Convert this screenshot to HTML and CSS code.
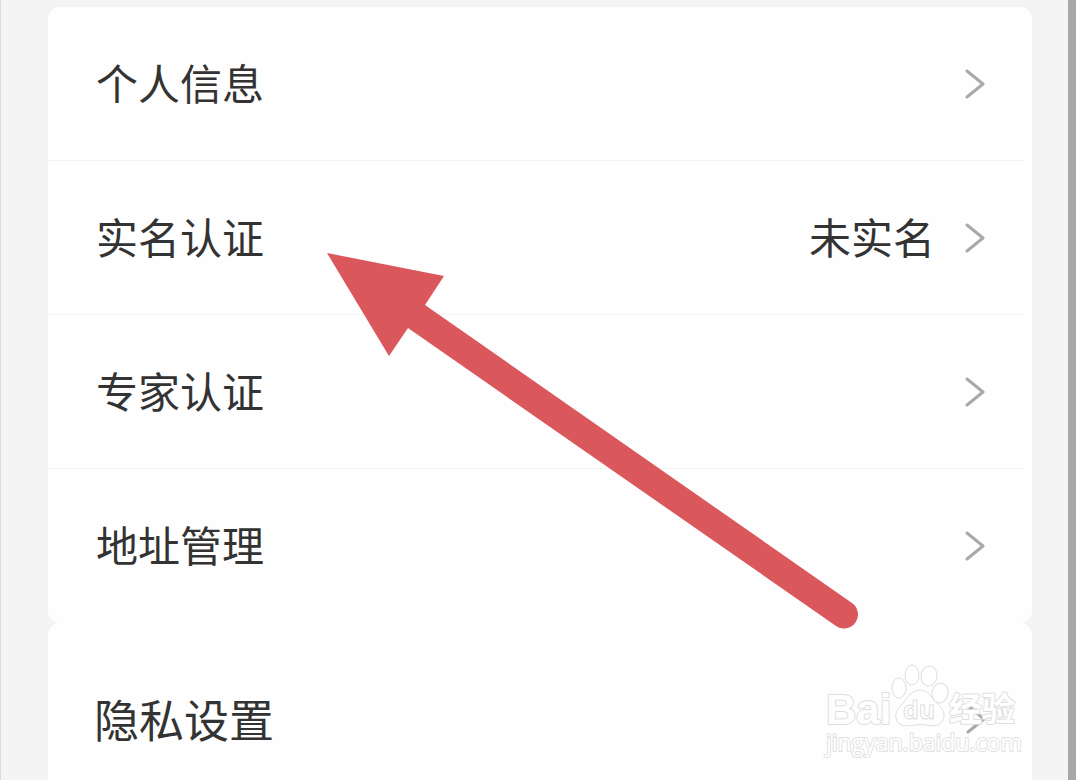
FILE: index.html
```html
<!DOCTYPE html>
<html lang="zh-CN">
<head>
<meta charset="utf-8">
<meta name="viewport" content="width=device-width, initial-scale=1">
<title>个人信息</title>
<link rel="stylesheet" href="styles.css">
</head>
<body>
<main class="screen">
  <nav class="cards">
    <ul class="card">
      <li class="item"><a class="row" href="#profile"><span class="label">个人信息</span><svg class="chevron" viewBox="0 0 20 30" aria-hidden="true"><path d="M2 2 18 15 2 28"/></svg></a></li>
      <li class="item"><a class="row" href="#realname"><span class="label">实名认证</span><span class="value">未实名</span><svg class="chevron" viewBox="0 0 20 30" aria-hidden="true"><path d="M2 2 18 15 2 28"/></svg></a></li>
      <li class="item"><a class="row" href="#expert"><span class="label">专家认证</span><svg class="chevron" viewBox="0 0 20 30" aria-hidden="true"><path d="M2 2 18 15 2 28"/></svg></a></li>
      <li class="item"><a class="row" href="#address"><span class="label">地址管理</span><svg class="chevron" viewBox="0 0 20 30" aria-hidden="true"><path d="M2 2 18 15 2 28"/></svg></a></li>
    </ul>
    <ul class="card">
      <li class="item"><a class="row row-large" href="#privacy"><span class="label">隐私设置</span><svg class="chevron" viewBox="0 0 20 30" aria-hidden="true"><path d="M2 2 18 15 2 28"/></svg></a></li>
    </ul>
  </nav>
  <svg class="pointer" viewBox="0 0 532 378" aria-hidden="true">
    <path d="M1 1 118 24 99 53 526 351A14 14 0 0 1 510 374L82 76 63 104Z"/>
  </svg>
  <svg class="watermark" viewBox="0 0 204 100" role="img" aria-label="Baidu 经验">
    <g class="mark">
      <ellipse cx="79" cy="28" rx="7" ry="10"/>
      <ellipse cx="92" cy="15" rx="7" ry="10"/>
      <ellipse cx="109" cy="16" rx="8" ry="10" transform="rotate(8 109 16)"/>
      <ellipse cx="120" cy="33" rx="8" ry="10" transform="rotate(12 120 33)"/>
      <path d="M99 30C90 31 87 39 82 44C77 49 74 54 77 61C80 67 88 66 95 65Q100 64 107 65C115 67 122 65 124 57C125 49 119 46 114 40C110 34 106 30 99 30Z"/>
      <text class="latin" x="6" y="64">Bai</text>
      <text class="du" x="83" y="59">du</text>
      <text class="han" x="129" y="61">经验</text>
      <text class="url" x="6" y="91">jingyan.baidu.com</text>
    </g>
  </svg>
</main>
</body>
</html>
```
FILE: styles.css
```css
* {
  box-sizing: border-box;
}

body {
  margin: 0;
  background: #f4f4f4;
  color: #333;
  font-family: "Noto Sans CJK SC", "Noto Sans", sans-serif;
}

.screen {
  position: relative;
  height: 100vh;
  overflow: hidden;
  padding: 7px 36px 0 47px;
  border-left: 1px solid #dcdcdc;
  border-right: 8px solid #a8a8a8;
}

.card {
  margin: 0;
  padding: 0;
  list-style: none;
  background: #fefefe;
  border-radius: 12px;
}

.item:not(:last-child) {
  background: linear-gradient(#f3f3f3, #f3f3f3) no-repeat 0 100% / calc(100% - 8px) 1px;
}

.row {
  display: flex;
  align-items: center;
  height: 154px;
  padding: 0 47px 0 48px;
  color: inherit;
  font-size: 42px;
  line-height: 60px;
  text-decoration: none;
}

.row-large {
  height: 192px;
  padding: 0 46px;
  font-size: 45px;
}

.label {
  flex: 1;
}

.row:not(.row-large) .label,
.value {
  margin-bottom: 4px;
}

.value {
  margin-right: 30px;
}

.chevron {
  flex: none;
  width: 20px;
  height: 30px;
  fill: none;
  stroke: #a9a9a9;
  stroke-width: 3;
  stroke-linecap: round;
  stroke-linejoin: round;
}

.pointer {
  position: absolute;
  top: 252px;
  left: 325px;
  width: 532px;
  height: 378px;
  fill: #da575c;
}

.watermark {
  position: absolute;
  top: 660px;
  right: 44px;
  width: 204px;
  height: 100px;
}

.mark {
  fill: #fff;
  fill-opacity: 0.7;
  stroke: #dedede;
  stroke-width: 1;
  stroke-linejoin: round;
}

.latin,
.han {
  fill-opacity: 1;
  stroke-width: 2;
  paint-order: stroke;
}

.latin {
  font: bold 42px "Liberation Sans", Arial, sans-serif;
}

.du {
  font: bold 25px "Open Sans", sans-serif;
}

.han {
  font: bold 33px "Noto Sans CJK SC", sans-serif;
}

.url {
  font: 23px "Open Sans", sans-serif;
  fill-opacity: 1;
  stroke: #e2e2e2;
  stroke-width: 2;
  paint-order: stroke;
}
```
